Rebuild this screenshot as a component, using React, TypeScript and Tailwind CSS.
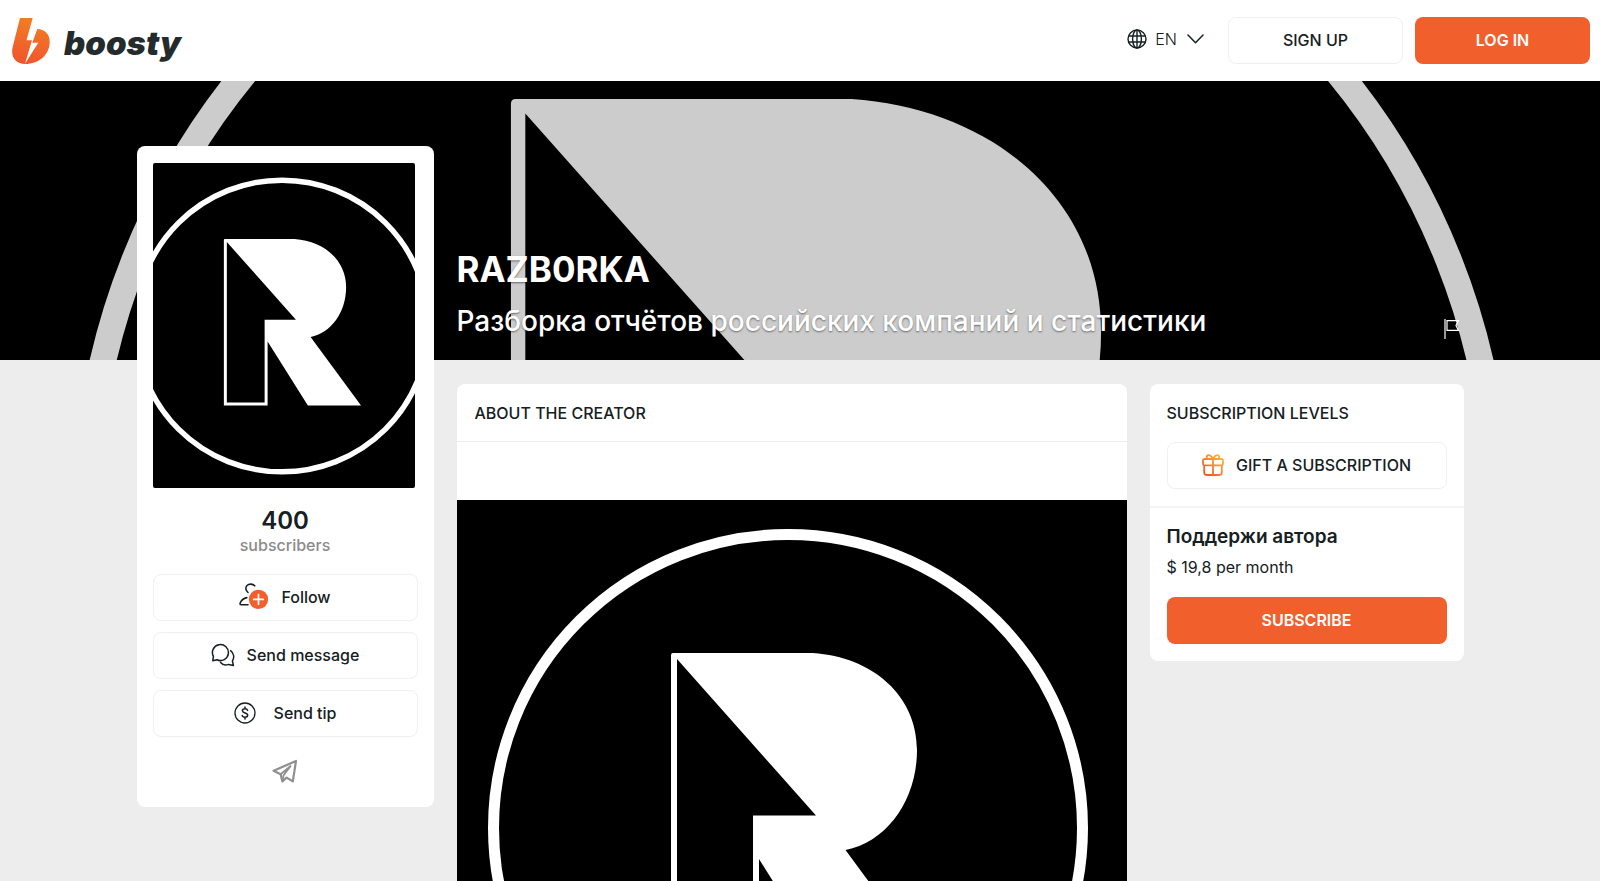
import type { ReactNode } from "react";

interface EmblemProps {
  className?: string;
  viewBox?: string;
}

const Emblem = ({ className, viewBox = "0 0 670 654" }: EmblemProps) => (
  <svg
    viewBox={viewBox}
    preserveAspectRatio="xMidYMid slice"
    className={className}
    role="img"
    aria-label="RAZB0RKA"
  >
    <rect width="670" height="654" fill="#000" />
    <ellipse cx="331" cy="328" rx="294.5" ry="293.5" fill="none" stroke="currentColor" strokeWidth="11" />
    <path
      fill="currentColor"
      fillRule="evenodd"
      d="M214 155Q214 153 216 153H356C415 157 460 195 460 250C460 300 430 342 388.5 350L490 488H383L302 359V488H214ZM220 159V482H296V315.5H359Z"
    />
  </svg>
);

const BoostyMark = () => (
  <svg viewBox="0 0 38 46" className="h-[46px] w-[38px]" aria-hidden="true">
    <defs>
      <linearGradient id="mark" x1="0.6" y1="0" x2="0.4" y2="1">
        <stop offset="0" stopColor="#f08023" />
        <stop offset="0.7" stopColor="#f2602b" />
        <stop offset="1" stopColor="#f0562a" />
      </linearGradient>
    </defs>
    <path
      fill="url(#mark)"
      d="M8 0H20.7L14.5 22.3H20L13 45.8L26.3 24.7H20.3L25.3 11C32.5 11.3 37.7 16 37.7 23.5C37.7 36.5 27.5 46 13 46C4 46 -1.6 39.5 .6 29.3Z"
    />
  </svg>
);

const GlobeIcon = () => (
  <svg viewBox="0 0 20 20" className="size-5" fill="none" stroke="currentColor" strokeWidth="1.4" aria-hidden="true">
    <circle cx="10" cy="10" r="9" />
    <ellipse cx="10" cy="10" rx="4.4" ry="9" />
    <path d="M10 1V19M1.8 7H18.2M1.8 13H18.2" />
  </svg>
);

const ChevronIcon = () => (
  <svg
    viewBox="0 0 17 10"
    className="h-[10px] w-[17px]"
    fill="none"
    stroke="currentColor"
    strokeWidth="1.5"
    strokeLinecap="round"
    strokeLinejoin="round"
    aria-hidden="true"
  >
    <path d="M1 1L8.5 8.8L16 1" />
  </svg>
);

const FlagIcon = () => (
  <svg viewBox="0 0 16 20" className="h-5 w-4" fill="none" stroke="currentColor" strokeWidth="1.2" aria-hidden="true">
    <path d="M1 0V20M3 1.6H14.5L12 6.5L14.5 11.4H3Z" />
  </svg>
);

const FollowIcon = () => (
  <svg viewBox="0 0 30 27" className="h-[27px] w-[30px]" fill="none" aria-hidden="true">
    <g stroke="currentColor" strokeWidth="1.6" strokeLinecap="round">
      <path d="M9 9.5C6.5 7.5 6.2 4.5 8 2.5C10 .6 13.8 .6 15.7 2.8" />
      <path d="M9 21.8H2.2C1 21.8 .8 21 1.2 20C2.4 17 5 15.2 7.8 14.6" />
    </g>
    <circle cx="19.5" cy="16.4" r="9.6" fill="#f15f2c" />
    <path d="M19.5 11.6V21.2M14.7 16.4H24.3" stroke="#fff" strokeWidth="1.7" strokeLinecap="round" />
  </svg>
);

const MessageIcon = () => (
  <svg
    viewBox="0 0 24 24"
    className="size-6"
    fill="none"
    stroke="currentColor"
    strokeWidth="1.5"
    strokeLinecap="round"
    strokeLinejoin="round"
    aria-hidden="true"
  >
    <path d="M2.4 13.4A8 8 0 1 1 6 16.8L1.8 17.8Z" />
    <path d="M19.6 7.6C23 10.2 23.6 14.6 21.4 18L22.4 22.4L17.6 21.4C14.8 22.6 11.6 21.8 9.6 19.4" />
  </svg>
);

const TipIcon = () => (
  <svg viewBox="0 0 22 22" className="size-[22px]" fill="none" stroke="currentColor" strokeWidth="1.3" aria-hidden="true">
    <circle cx="11" cy="11" r="10" />
    <path
      strokeLinecap="round"
      strokeWidth="1.5"
      d="M13.6 8.4C13.3 7.3 12.3 6.8 11 6.8C9.5 6.8 8.4 7.6 8.4 8.8C8.4 11.6 13.7 10.2 13.7 13.1C13.7 14.4 12.5 15.2 11 15.2C9.5 15.2 8.4 14.6 8.2 13.4M11 5V6.8M11 15.2V17"
    />
  </svg>
);

const TelegramIcon = () => (
  <svg
    viewBox="0 0 26 24"
    className="h-6 w-[26px]"
    fill="none"
    stroke="currentColor"
    strokeWidth="2.2"
    strokeLinejoin="round"
    aria-hidden="true"
  >
    <path d="M1.6 11.8L24 2L20.8 22.4L14.6 18.6L10.4 22.4L8.6 15.2Z" />
    <path d="M8.6 15.2L18.6 7L11.6 16.2L10.4 22.4" strokeWidth="1.8" />
  </svg>
);

const GiftIcon = () => (
  <svg viewBox="0 0 22 22" className="size-[22px]" fill="none" stroke="url(#gift)" strokeWidth="1.8" aria-hidden="true">
    <defs>
      <linearGradient id="gift" gradientUnits="userSpaceOnUse" x1="20" y1="2" x2="4" y2="20">
        <stop offset="0" stopColor="#fbbb3f" />
        <stop offset="1" stopColor="#f1562b" />
      </linearGradient>
    </defs>
    <rect x="1" y="5" width="20" height="6.4" rx="1.8" />
    <path d="M2.2 11.4V18.6Q2.2 21 4.6 21H17.4Q19.8 21 19.8 18.6V11.4M11 5V21" />
    <path d="M11 5C9.6 1.8 7.4 .6 5.8 1.4C4.2 2.2 4.4 4.2 5.6 5M11 5C12.4 1.8 14.6 .6 16.2 1.4C17.8 2.2 17.6 4.2 16.4 5" />
  </svg>
);

const OutlineButton = ({ children, className = "" }: { children: ReactNode; className?: string }) => (
  <button
    type="button"
    className={`flex h-[47px] items-center justify-center rounded-lg border border-[#f0f0f0] bg-white pb-0.5 font-medium hover:bg-gray-50 ${className}`}
  >
    {children}
  </button>
);

const Header = () => (
  <header className="flex h-[81px] items-center justify-between bg-white pr-[10px] pl-3">
    <a href="#" aria-label="boosty" className="flex items-center gap-[14px]">
      <BoostyMark />
      <span className="pt-1 text-[33px] leading-8 font-black text-[#242b2c] italic">boosty</span>
    </a>
    <div className="flex items-center gap-3">
      <button type="button" className="mr-3 flex items-center gap-2 pb-1 font-light">
        <GlobeIcon />
        <span className="mr-0.5">EN</span>
        <ChevronIcon />
      </button>
      <OutlineButton className="w-[175px]">SIGN UP</OutlineButton>
      <button type="button" className="h-[47px] w-[175px] rounded-lg bg-[#f15f2c] pb-0.5 font-semibold text-white">
        LOG IN
      </button>
    </div>
  </header>
);

const Banner = () => (
  <section className="relative h-[279px] overflow-hidden bg-black">
    <Emblem viewBox="1 145.5 667 116.3" className="absolute inset-0 size-full text-[#ccc]" />
    <div className="relative mx-auto flex h-full max-w-[1327px] items-end justify-between pr-1 pb-[21px] pl-80 text-white">
      <div className="[text-shadow:0_1px_2px_rgba(0,0,0,0.5)]">
        <h1 className="text-[35px] leading-[44px] font-bold">RAZB0RKA</h1>
        <p className="mt-3 text-[28px] leading-9 font-medium">Разборка отчётов российских компаний и статистики</p>
      </div>
      <button type="button" aria-label="Report" className="text-white">
        <FlagIcon />
      </button>
    </div>
  </section>
);

const ProfileCard = () => (
  <aside className="relative -mt-[238px] rounded-lg bg-white px-4 pt-[17px] pb-6">
    <Emblem className="h-[325px] w-[262px] rounded-xs text-white" />
    <div className="mt-[19px] text-center">
      <p className="text-2xl leading-7 font-semibold">400</p>
      <p className="leading-5 font-medium text-[#8a8a8a]">subscribers</p>
    </div>
    <div className="mt-[19px] flex flex-col gap-[11px]">
      <OutlineButton className="gap-3">
        <FollowIcon />
        Follow
      </OutlineButton>
      <OutlineButton className="gap-3">
        <MessageIcon />
        Send message
      </OutlineButton>
      <OutlineButton className="gap-[18px]">
        <TipIcon />
        Send tip
      </OutlineButton>
    </div>
    <a href="#" aria-label="Telegram" className="mt-[22px] flex justify-center text-[#8f8f8f]">
      <TelegramIcon />
    </a>
  </aside>
);

const About = () => (
  <main className="overflow-hidden rounded-t-lg bg-white">
    <h2 className="border-b border-[#ededed] px-[18px] pt-[17px] pb-4 leading-6 font-medium">ABOUT THE CREATOR</h2>
    <Emblem className="mt-[58px] block w-full text-white" />
  </main>
);

const Levels = () => (
  <aside className="rounded-lg bg-white">
    <div className="border-b-2 border-[#f4f4f4] px-[17px] pt-[17px] pb-[17px]">
      <h2 className="mb-[17px] leading-6 font-medium">SUBSCRIPTION LEVELS</h2>
      <OutlineButton className="w-full gap-3">
        <GiftIcon />
        GIFT A SUBSCRIPTION
      </OutlineButton>
    </div>
    <div className="px-[17px] pt-[17px] pb-[17px]">
      <h3 className="text-[19px] leading-6 font-semibold">Поддержи автора</h3>
      <p className="mt-1.5 leading-6">$ 19,8 per month</p>
      <button type="button" className="mt-[18px] h-[47px] w-full rounded-lg bg-[#f15f2c] pb-0.5 font-semibold text-white">
        SUBSCRIBE
      </button>
    </div>
  </aside>
);

const App = () => (
  <div className="h-screen overflow-y-auto bg-[#ededed] font-['Inter',sans-serif] text-base text-[#152022] [scrollbar-width:none]">
    <Header />
    <Banner />
    <div className="mx-auto grid max-w-[1327px] grid-cols-[297px_1fr_314px] items-start gap-[23px] pt-6">
      <ProfileCard />
      <About />
      <Levels />
    </div>
  </div>
);

export default App;
